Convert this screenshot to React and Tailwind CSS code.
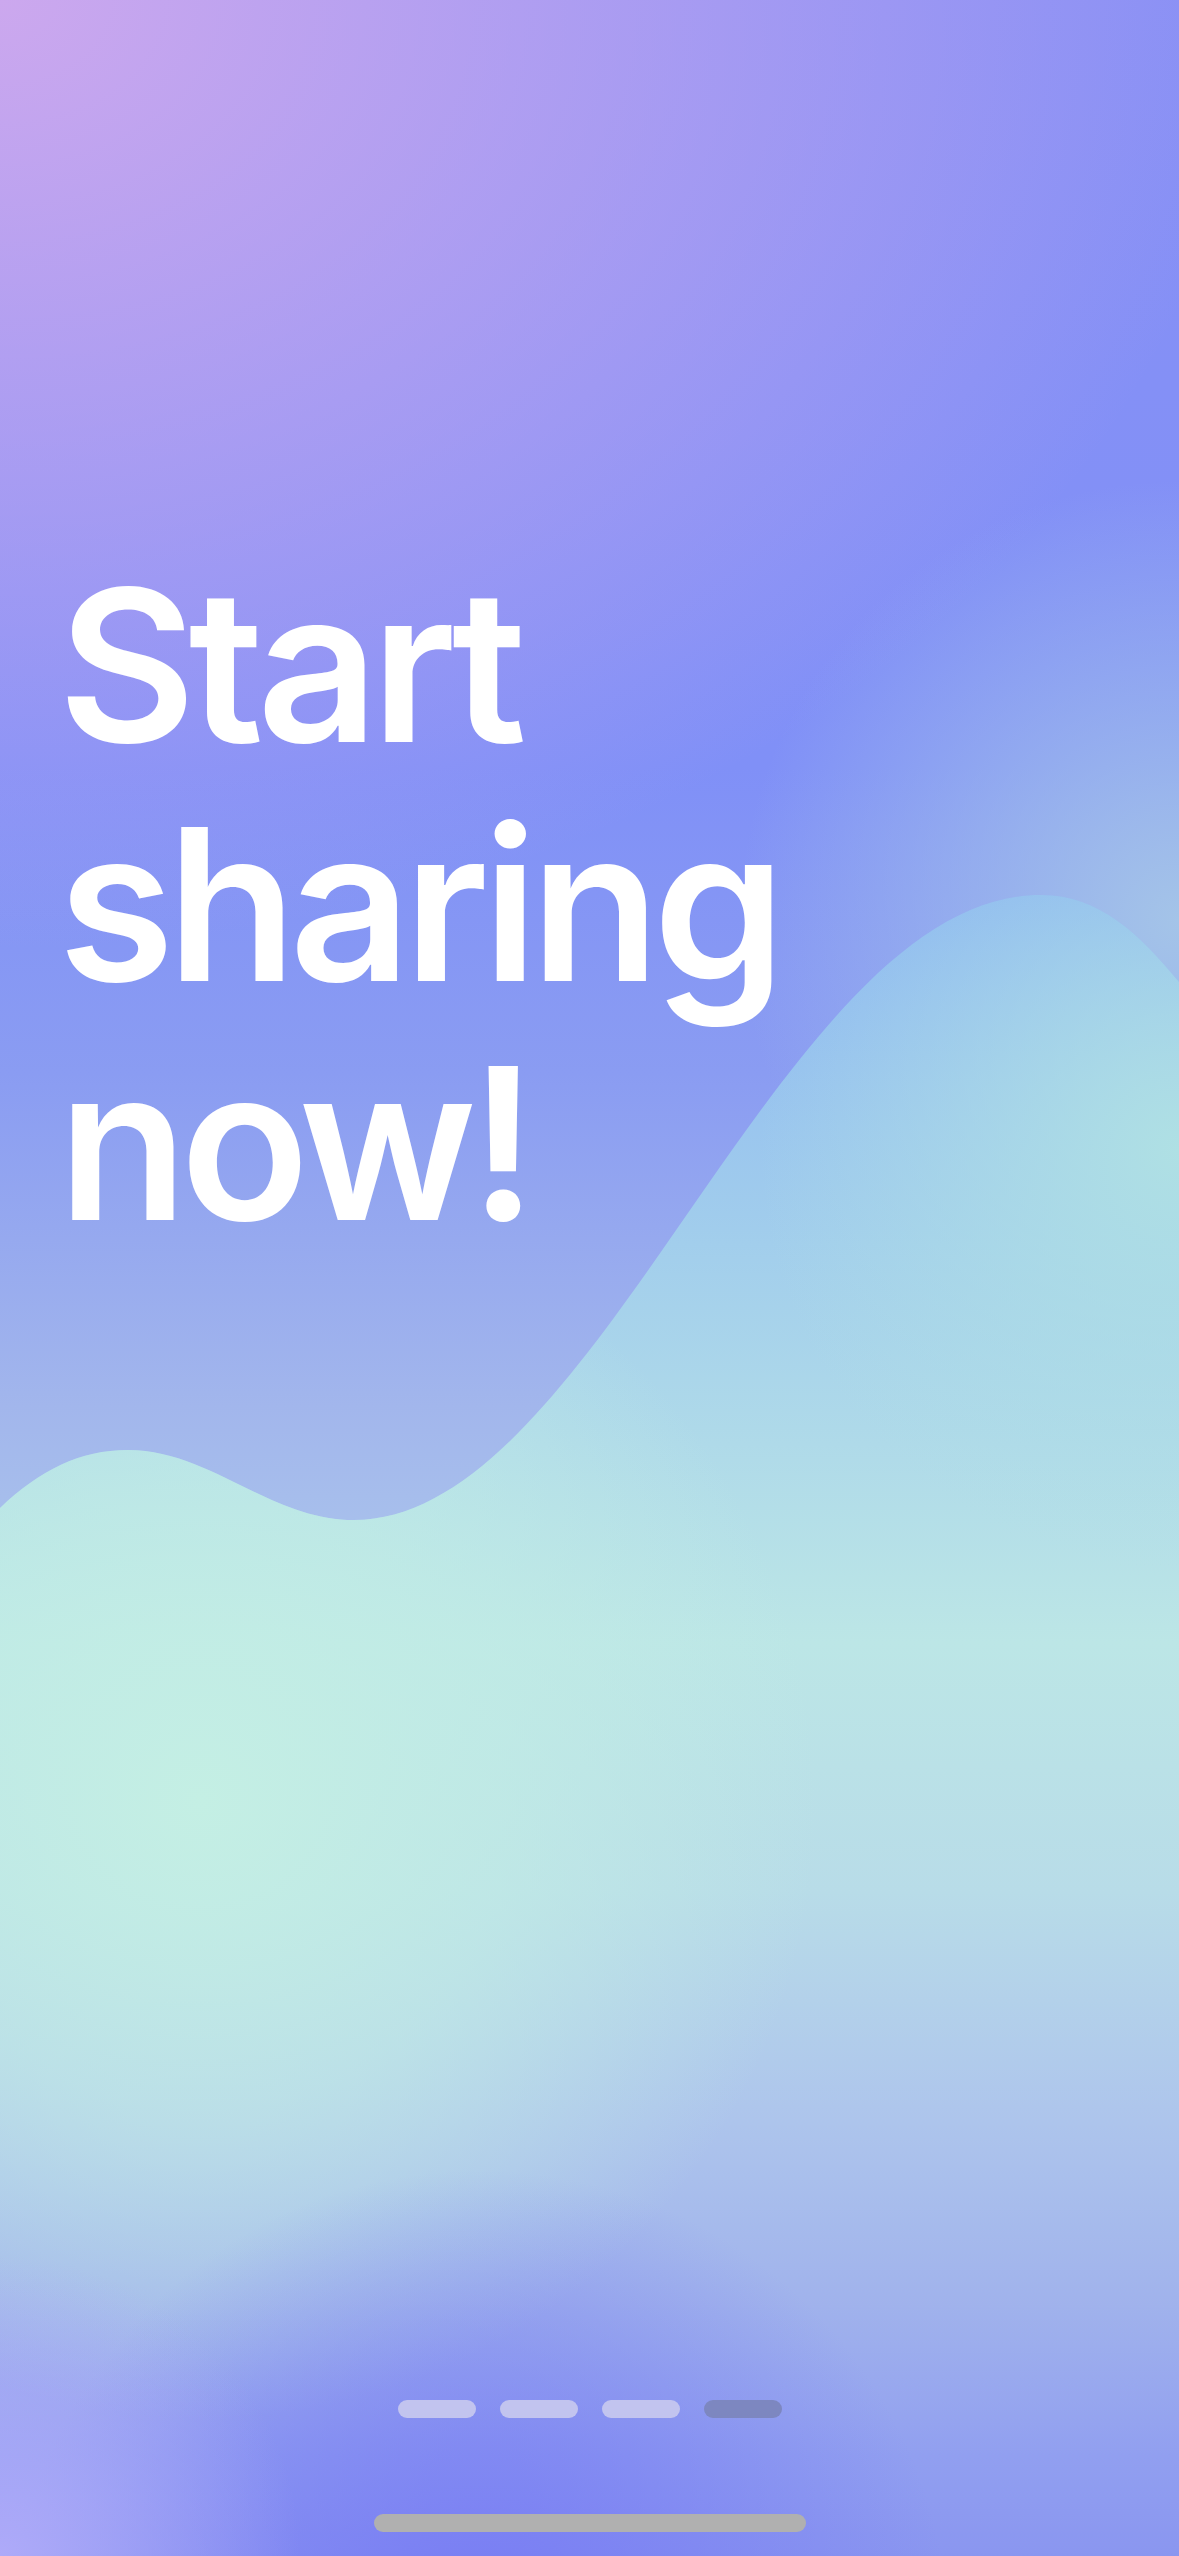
const pages = [false, false, false, true];

const wavePath =
  "M0,1508 C40,1470 80,1450 128,1450 C210,1450 270,1520 354,1520 C600,1520 780,895 1041,895 C1100,895 1140,935 1179,982 L1179,2556 L0,2556 Z";

const Wave = () => (
  <svg
    className="absolute inset-0"
    width="1179"
    height="2556"
    viewBox="0 0 1179 2556"
    preserveAspectRatio="none"
  >
    <defs>
      <linearGradient id="waveBase" x1="0" y1="895" x2="0" y2="2556" gradientUnits="userSpaceOnUse">
        <stop offset="0" stopColor="#8cb6f2" />
        <stop offset="0.21" stopColor="#a2ceec" />
        <stop offset="0.45" stopColor="#bce6e6" />
        <stop offset="0.6" stopColor="#b8dce8" />
        <stop offset="0.73" stopColor="#aec6ec" />
        <stop offset="0.85" stopColor="#a0b2ec" />
        <stop offset="0.94" stopColor="#919ff0" />
        <stop offset="1" stopColor="#8a96f0" />
      </linearGradient>
      <radialGradient id="mint" cx="200" cy="1800" r="620" gradientUnits="userSpaceOnUse">
        <stop offset="0" stopColor="#c4efe4" stopOpacity="1" />
        <stop offset="0.5" stopColor="#c2ede5" stopOpacity="0.65" />
        <stop offset="1" stopColor="#c2ede5" stopOpacity="0" />
      </radialGradient>
      <radialGradient id="teal" cx="1179" cy="1150" r="420" gradientUnits="userSpaceOnUse">
        <stop offset="0" stopColor="#afe0e4" stopOpacity="1" />
        <stop offset="1" stopColor="#afe0e4" stopOpacity="0" />
      </radialGradient>
      <radialGradient id="dusk" cx="480" cy="2640" r="470" gradientUnits="userSpaceOnUse">
        <stop offset="0" stopColor="#777bf4" stopOpacity="1" />
        <stop offset="1" stopColor="#777bf4" stopOpacity="0" />
      </radialGradient>
      <radialGradient id="corner" cx="0" cy="2556" r="300" gradientUnits="userSpaceOnUse">
        <stop offset="0" stopColor="#aeaaf9" stopOpacity="1" />
        <stop offset="1" stopColor="#aeaaf9" stopOpacity="0" />
      </radialGradient>
    </defs>
    <path d={wavePath} fill="url(#waveBase)" />
    <path d={wavePath} fill="url(#teal)" />
    <path d={wavePath} fill="url(#mint)" />
    <rect x="0" y="0" width="1179" height="2556" fill="url(#dusk)" />
    <rect x="0" y="0" width="1179" height="2556" fill="url(#corner)" />
  </svg>
);

const App = () => {
  return (
    <div className="relative w-[1179px] h-[2556px] overflow-hidden flex flex-col bg-[radial-gradient(ellipse_1250px_950px_at_0%_0%,#cca8ee_0%,rgba(204,168,238,0)_100%),radial-gradient(circle_at_100%_36%,#a4c4e8_0px,rgba(164,196,232,0)_440px),linear-gradient(to_bottom,#8890f5_0%,#8090f7_30%,#8a9cf2_42%,#a2b6ec_55%,#aac4ec_62%)] font-['Inter','Noto_Sans',sans-serif]">
      <Wave />

      {/* Title */}
      <div className="relative pt-[546px] pl-[58px]">
        <h1 className="text-white font-semibold text-[212px] leading-[239px] tracking-[-0.035em]">
          Start
          <br />
          sharing
          <br />
          now!
        </h1>
      </div>

      <div className="flex-1" />

      {/* Pager */}
      <div className="relative flex justify-center gap-[24px]">
        {pages.map((active, i) => (
          <div
            key={i}
            className={`w-[78px] h-[18px] rounded-full ${
              active ? "bg-[#7d87c0]" : "bg-[#c2c4ef]"
            }`}
          />
        ))}
      </div>

      {/* Home indicator */}
      <div className="relative flex justify-center mt-[96px] mb-[24px]">
        <div className="w-[432px] h-[18px] rounded-full bg-[#b0b0b0]" />
      </div>
    </div>
  );
};

export default App;
